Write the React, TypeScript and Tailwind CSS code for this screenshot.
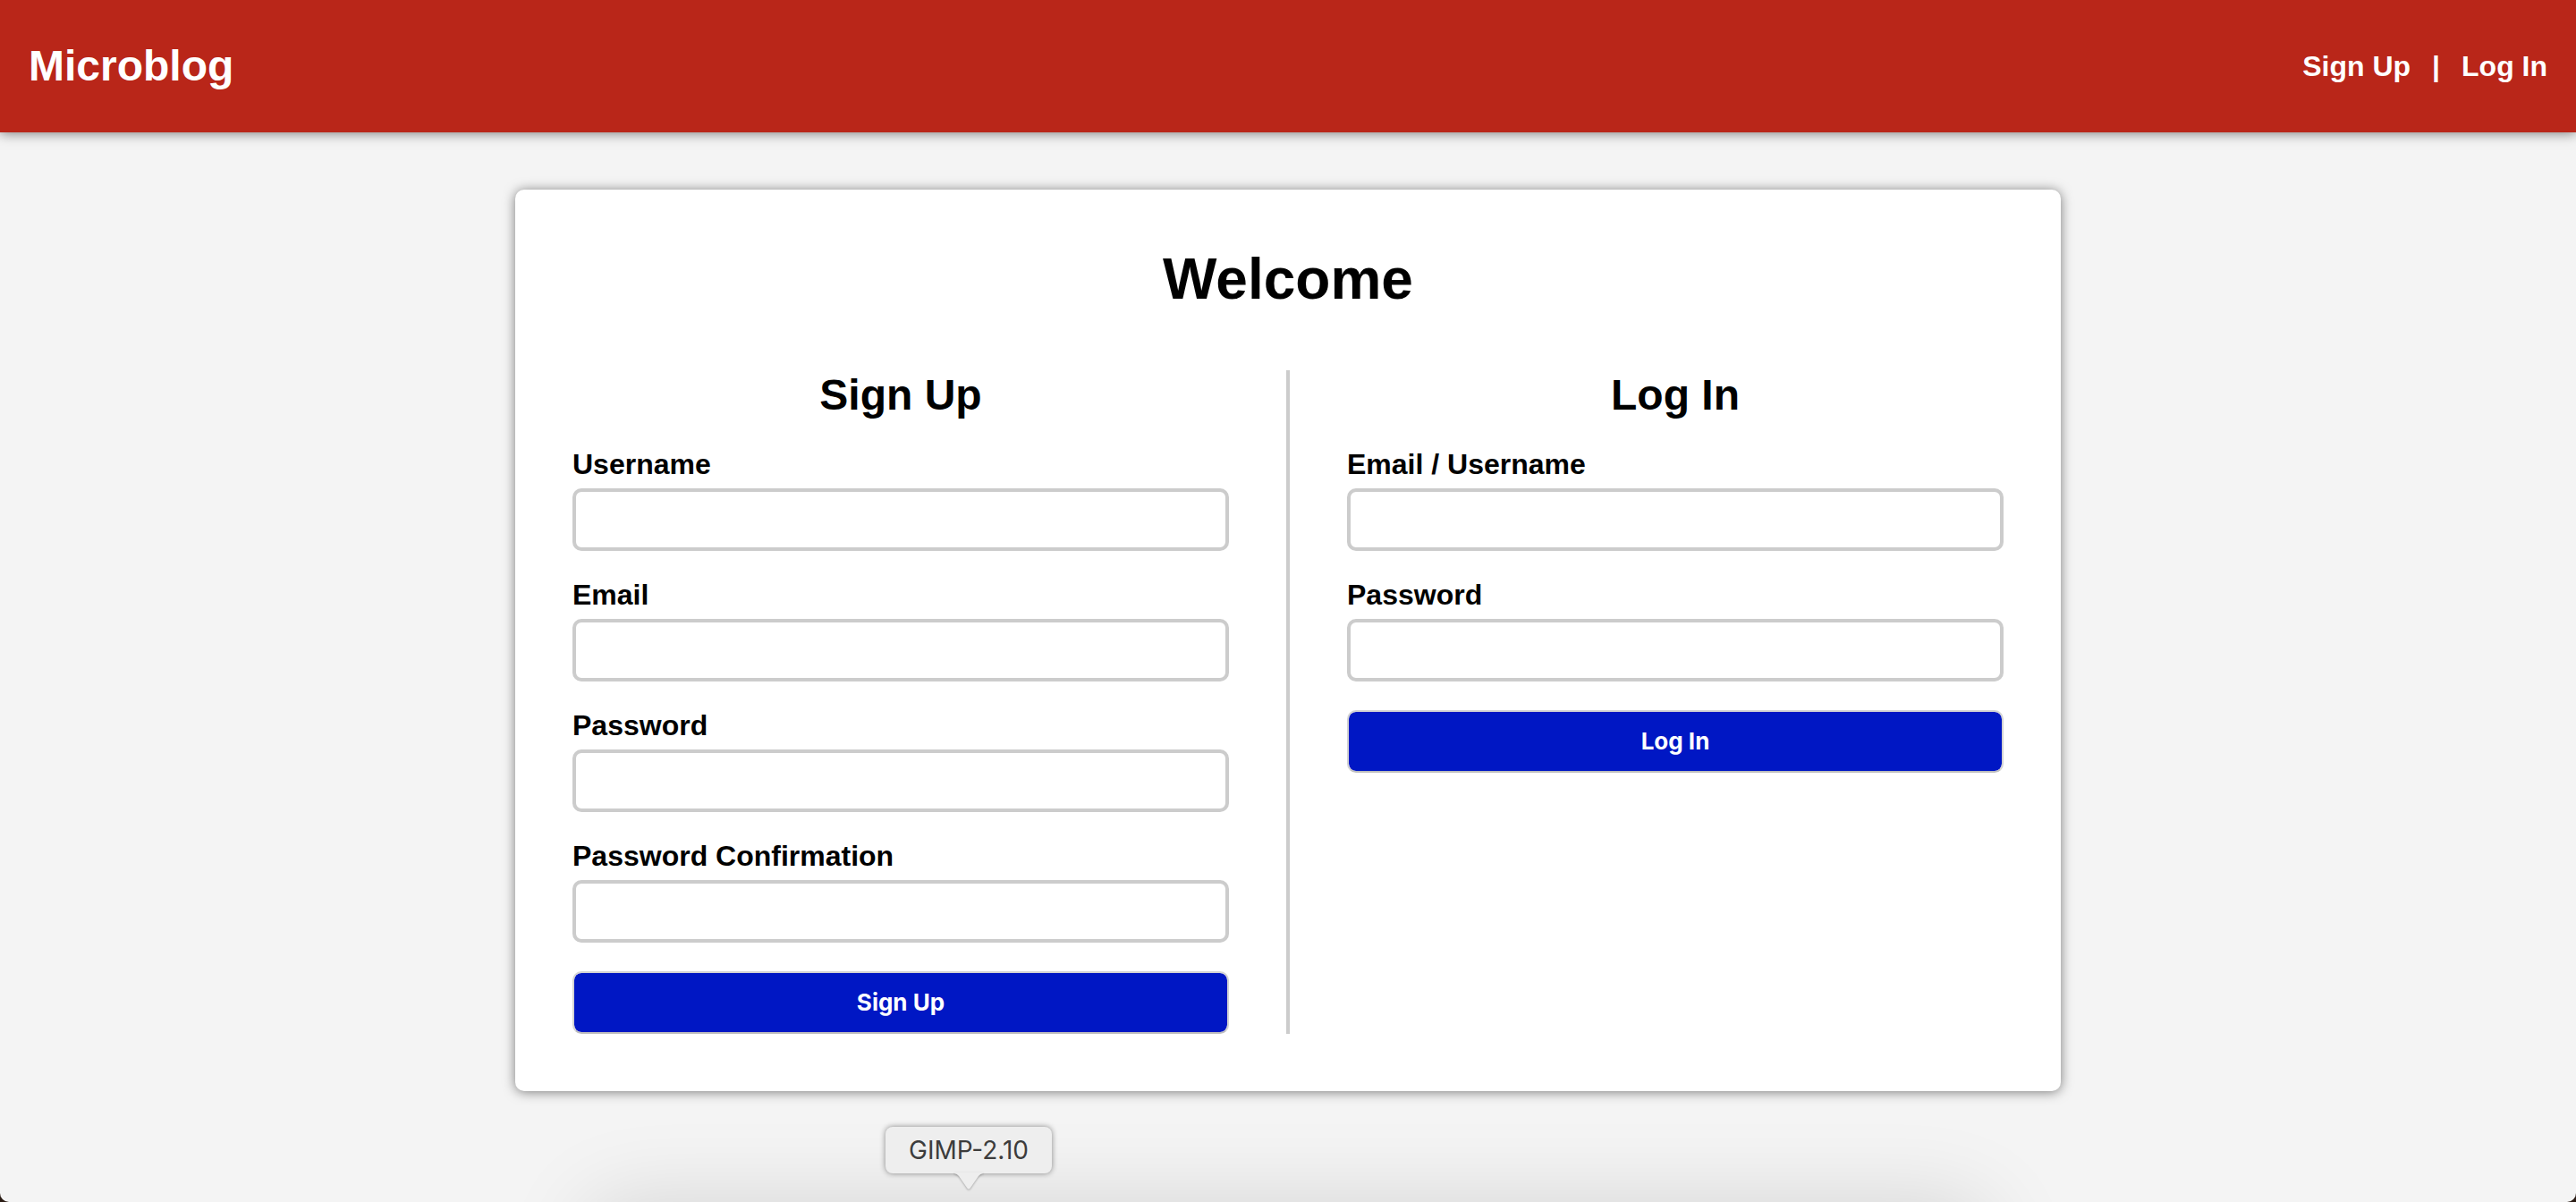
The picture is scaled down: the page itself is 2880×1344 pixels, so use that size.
import React from "react";

type FieldProps = { id: string; label: string; type?: string };

function Field({ id, label, type = "text" }: FieldProps) {
  return (
    <div className="flex flex-col gap-[10px]">
      <label htmlFor={id} className="text-[32px] leading-[34px] font-bold">
        {label}
      </label>
      <input
        id={id}
        name={id}
        type={type}
        className="h-[70px] w-full rounded-[10px] border-4 border-[#ccc] bg-white px-4 text-[28px] outline-none focus:border-[#0017c4]"
      />
    </div>
  );
}

type AuthFormProps = { title: string; fields: FieldProps[] };

function AuthForm({ title, fields }: AuthFormProps) {
  return (
    <form className="flex flex-col gap-8" onSubmit={(e) => e.preventDefault()}>
      <h2 className="text-center text-[48px] leading-14 font-bold">{title}</h2>
      {fields.map((field) => (
        <Field key={field.id} {...field} />
      ))}
      <button
        type="submit"
        className="h-[70px] w-full rounded-[10px] border-2 border-[#d3d3d3] border-b-[#bdbdbd] bg-[#0017c4] bg-clip-padding font-['Inter',sans-serif] text-[26px] leading-8 font-bold text-white"
      >
        {title}
      </button>
    </form>
  );
}

const signUpFields: FieldProps[] = [
  { id: "signup-username", label: "Username" },
  { id: "signup-email", label: "Email", type: "email" },
  { id: "signup-password", label: "Password", type: "password" },
  { id: "signup-confirmation", label: "Password Confirmation", type: "password" },
];

const logInFields: FieldProps[] = [
  { id: "login-user", label: "Email / Username" },
  { id: "login-password", label: "Password", type: "password" },
];

function DockTooltip({ label }: { label: string }) {
  return (
    <div className="absolute bottom-8 left-[990px] rounded-lg bg-[#eeeeee] px-[26px] py-2 font-['Inter',sans-serif] text-[28px] leading-9 text-[#3c3c3c] shadow-[0_0_6px_rgba(0,0,0,0.45)]">
      {label}
      <svg
        viewBox="0 0 32 18"
        className="absolute top-full left-1/2 h-[18px] w-8 -translate-x-1/2 overflow-visible drop-shadow-[0_1px_1px_rgba(0,0,0,0.3)]"
        aria-hidden="true"
      >
        <path d="M0 -1V0Q3 0.500 5 3L14 16Q16 19 18 16L27 3Q29 0.500 32 0V-1Z" fill="#eeeeee" />
      </svg>
    </div>
  );
}

export default function App() {
  return (
    <div className="bg-[#2a1c14]">
      <div className="relative flex min-h-screen flex-col overflow-hidden rounded-b-[10px] bg-[#f4f4f4] font-['Liberation_Sans',Arial,sans-serif] text-black">
        <header className="flex items-center justify-between bg-[#b92619] px-8 py-[46px] text-white shadow-[0_1px_13px_rgba(0,0,0,0.5)]">
          <a href="#" className="text-[48px] leading-14 font-bold">
            Microblog
          </a>
          <nav className="flex items-center gap-6 text-[32px] leading-[34px] font-bold">
            <a href="#signup">Sign Up</a>
            <span>|</span>
            <a href="#login">Log In</a>
          </nav>
        </header>

        <main className="mx-auto mt-16 w-3/5 rounded-[10px] bg-white p-16 shadow-[0_1px_13px_rgba(0,0,0,0.5)]">
          <h1 className="mb-[66px] text-center text-[64px] leading-[72px] font-bold">Welcome</h1>
          <div className="grid grid-cols-[1fr_auto_1fr] gap-16">
            <AuthForm title="Sign Up" fields={signUpFields} />
            <div className="w-1 bg-[#ccc]" />
            <AuthForm title="Log In" fields={logInFields} />
          </div>
        </main>

        <div className="absolute inset-x-[656px] top-full h-32 rounded-[40px] shadow-[0_0_96px_rgba(0,0,0,0.13)]" />
        <DockTooltip label="GIMP-2.10" />
      </div>
    </div>
  );
}
